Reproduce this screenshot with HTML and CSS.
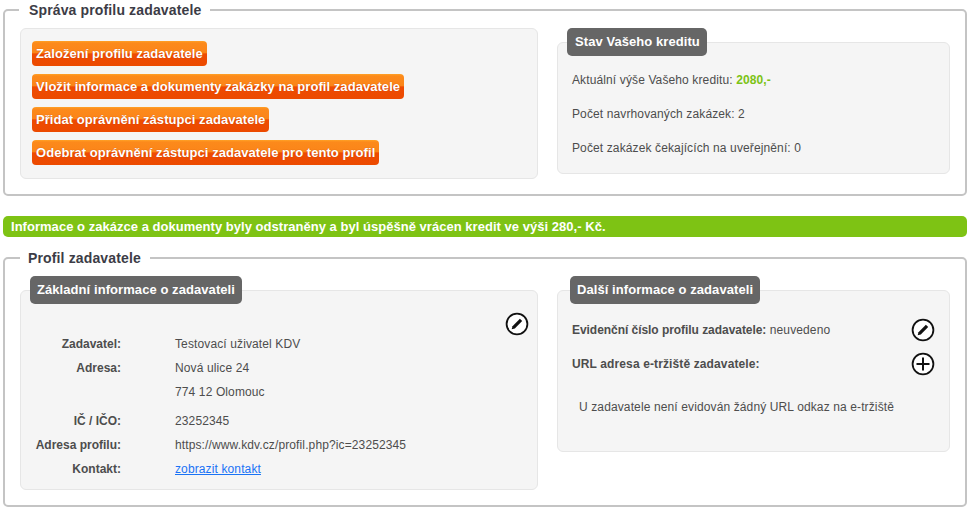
FILE: index.html
```html
<!DOCTYPE html>
<html lang="cs">
<head>
    <meta charset="UTF-8">
    <title>Profil zadavatele</title>
    <link rel="stylesheet" href="styles.css">
</head>
<body>
    <fieldset class="box box-top">
        <legend>Správa profilu zadavatele</legend>
        <div class="columns">
            <div class="panel panel-left panel-actions">
                <a class="btn" href="#">Založení profilu zadavatele</a>
                <a class="btn" href="#">Vložit informace a dokumenty zakázky na profil zadavatele</a>
                <a class="btn" href="#">Přidat oprávnění zástupci zadavatele</a>
                <a class="btn" href="#">Odebrat oprávnění zástupci zadavatele pro tento profil</a>
            </div>
            <div class="panel panel-right panel-credit">
                <h3>Stav Vašeho kreditu</h3>
                <p>Aktuální výše Vašeho kreditu: <strong class="credit">2080,-</strong></p>
                <p>Počet navrhovaných zakázek: 2</p>
                <p>Počet zakázek čekajících na uveřejnění: 0</p>
            </div>
        </div>
    </fieldset>

    <div class="message">Informace o zakázce a dokumenty byly odstraněny a byl úspěšně vrácen kredit ve výši 280,- Kč.</div>

    <fieldset class="box box-profile">
        <legend>Profil zadavatele</legend>
        <div class="columns">
            <div class="panel panel-left panel-basic">
                <h3>Základní informace o zadavateli</h3>
                <a class="icon icon-edit-main" href="#" aria-label="Upravit">
                    <svg viewBox="0 0 24 24" width="24" height="24">
                        <circle cx="12" cy="12" r="10.4" fill="#fff" stroke="#111" stroke-width="1.8"/>
                        <path d="M14.9 6.8l2.3 2.3-7.4 7.4-3.1.8.8-3.1z" fill="#111"/>
                    </svg>
                </a>
                <dl class="details">
                    <dt>Zadavatel:</dt><dd>Testovací uživatel KDV</dd>
                    <dt>Adresa:</dt><dd>Nová ulice 24</dd>
                    <dt></dt><dd>774 12 Olomouc</dd>
                    <dt class="gap">IČ / IČO:</dt><dd class="gap">23252345</dd>
                    <dt>Adresa profilu:</dt><dd>https://www.kdv.cz/profil.php?ic=23252345</dd>
                    <dt>Kontakt:</dt><dd><a href="#">zobrazit kontakt</a></dd>
                </dl>
            </div>
            <div class="panel panel-right panel-more">
                <h3>Další informace o zadavateli</h3>
                <div class="more-row">
                    <span><b>Evidenční číslo profilu zadavatele:</b> neuvedeno</span>
                    <a class="icon" href="#" aria-label="Upravit">
                        <svg viewBox="0 0 24 24" width="24" height="24">
                            <circle cx="12" cy="12" r="10.4" fill="#fff" stroke="#111" stroke-width="1.8"/>
                            <path d="M14.9 6.8l2.3 2.3-7.4 7.4-3.1.8.8-3.1z" fill="#111"/>
                        </svg>
                    </a>
                </div>
                <div class="more-row">
                    <span><b>URL adresa e-tržiště zadavatele:</b></span>
                    <a class="icon" href="#" aria-label="Přidat">
                        <svg viewBox="0 0 24 24" width="24" height="24">
                            <circle cx="12" cy="12" r="10.4" fill="#fff" stroke="#111" stroke-width="1.8"/>
                            <path d="M12 5.5v13M5.5 12h13" stroke="#111" stroke-width="2" fill="none"/>
                        </svg>
                    </a>
                </div>
                <p class="no-url">U zadavatele není evidován žádný URL odkaz na e-tržiště</p>
            </div>
        </div>
    </fieldset>
</body>
</html>
```

FILE: styles.css
```css
html, body {
    height: 510px;
    overflow: hidden;
}
body {
    font-family: "Liberation Sans", Arial, sans-serif;
    font-size: 12px;
    letter-spacing: .12px;
    color: #4d4d4d;
    background-color: #fff;
    margin: 0;
    padding: 0 3px;
}
.box {
    border: 2px solid #c4c4c4;
    border-radius: 5px;
    margin: 0;
    padding: 0 15px;
    min-width: 0;
}
.box legend {
    font-size: 14px;
    font-weight: bold;
    color: #3c3c46;
    line-height: 16px;
    letter-spacing: .14px;
}
.box-top {
    height: 190px;
    margin-top: 2px;
}
.box-top legend {
    padding: 0 9px 0 10px;
    margin-left: -1px;
}
.box-profile {
    height: 253px;
    margin-top: 13px;
}
.box-profile legend {
    padding: 0 9px 0 8px;
}
.columns {
    display: flex;
    align-items: flex-start;
    justify-content: space-between;
}
.panel {
    background-color: #f5f5f5;
    border: 1px solid #e6e6e6;
    border-radius: 6px;
    box-sizing: border-box;
    position: relative;
}
.panel-left {
    width: 518px;
}
.panel-right {
    width: 393px;
}
.panel h3 {
    display: inline-block;
    margin: -15px 0 0 9px;
    padding: 0 7px;
    height: 28px;
    line-height: 27px;
    background-color: #666;
    color: #fff;
    font-size: 13px;
    font-weight: bold;
    letter-spacing: .07px;
    border-radius: 5px;
    vertical-align: top;
}
.panel-actions {
    height: 151px;
    padding: 12px 0 0 11px;
    margin-top: 10px;
    display: flex;
    flex-direction: column;
    align-items: flex-start;
    gap: 8px;
}
.btn {
    display: block;
    height: 25px;
    line-height: 25px;
    padding: 0 4px;
    border-radius: 4px;
    box-sizing: border-box;
    color: #fff;
    font-size: 13px;
    font-weight: bold;
    letter-spacing: .05px;
    text-decoration: none;
    white-space: nowrap;
    background: linear-gradient(to bottom, #ffa126 0, #fc8a1b 8%, #fb8519 46%, #ee4b02 52%, #ec4a00 100%);
    text-shadow: 0 0 1px #c44300;
}
.panel-credit {
    height: 132px;
    margin-top: 24px;
}
.panel-credit h3 {
    padding-left: 8px;
}
.panel-credit p {
    margin: 0 0 0 14px;
    height: 34px;
    line-height: 34px;
}
.panel-credit h3 + p {
    margin-top: 6px;
}
.credit {
    color: #7cc314;
}
.message {
    margin-top: 20px;
    height: 21px;
    line-height: 21px;
    padding-left: 8px;
    background-color: #7ec314;
    color: #fff;
    font-size: 13px;
    font-weight: bold;
    letter-spacing: .03px;
    border-radius: 5px;
}
.panel-basic {
    height: 200px;
    margin-top: 24px;
}
.panel-more {
    height: 162px;
    margin-top: 24px;
}
.panel-more h3 {
    margin-left: 12px;
}
.icon {
    display: block;
    width: 24px;
    height: 24px;
}
.icon-edit-main {
    position: absolute;
    top: 21px;
    right: 8px;
}
.details {
    display: grid;
    grid-template-columns: 100px 1fr;
    column-gap: 54px;
    margin: 27px 0 0;
    line-height: 24px;
}
.details dt {
    font-weight: bold;
    letter-spacing: 0;
    text-align: right;
}
.details dd {
    margin: 0;
}
.details .gap {
    margin-top: 5px;
}
.details a {
    color: #1a73f5;
}
.more-row {
    display: flex;
    justify-content: space-between;
    align-items: center;
    padding: 0 14px;
    height: 34px;
}
.more-row:first-of-type {
    margin-top: 8px;
}
.more-row:first-of-type b {
    letter-spacing: -.05px;
}
.no-url {
    margin: 19px 0 0 21px;
}
```
